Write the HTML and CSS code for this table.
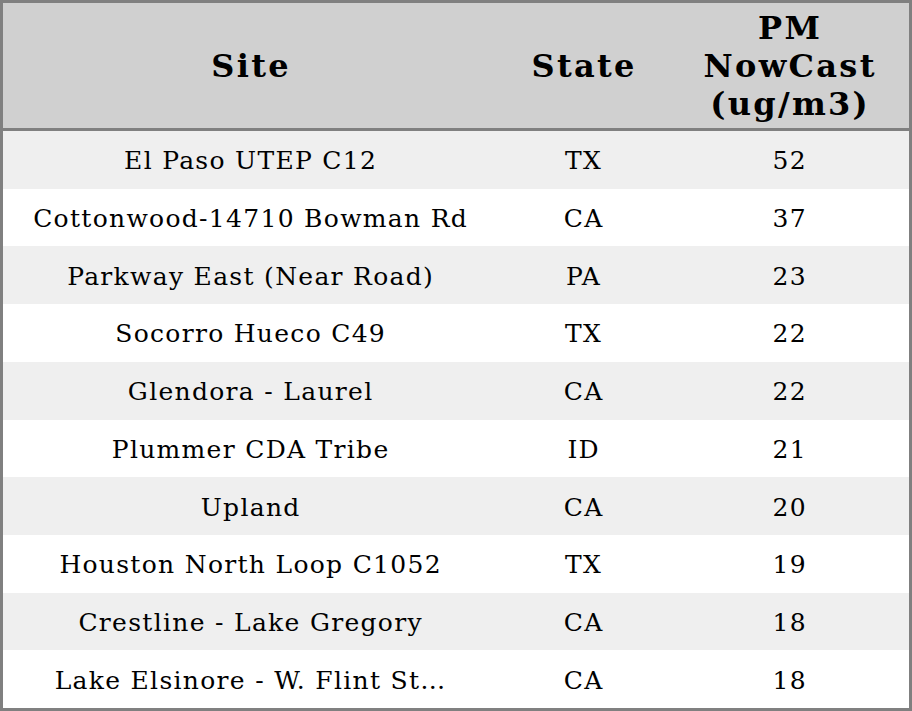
FILE: index.html
```html
<!DOCTYPE html>
<html>
<head>
<meta charset="utf-8">
<link rel="stylesheet" href="styles.css">
</head>
<body>
<div class="table">
  <div class="row head">
    <div class="cell">Site</div>
    <div class="cell">State</div>
    <div class="cell">PM<br>NowCast<br>(ug/m3)</div>
  </div>
  <div class="row odd"><div class="cell">El Paso UTEP C12</div><div class="cell">TX</div><div class="cell">52</div></div>
  <div class="row"><div class="cell">Cottonwood-14710 Bowman Rd</div><div class="cell">CA</div><div class="cell">37</div></div>
  <div class="row odd"><div class="cell">Parkway East (Near Road)</div><div class="cell">PA</div><div class="cell">23</div></div>
  <div class="row"><div class="cell">Socorro Hueco C49</div><div class="cell">TX</div><div class="cell">22</div></div>
  <div class="row odd"><div class="cell">Glendora - Laurel</div><div class="cell">CA</div><div class="cell">22</div></div>
  <div class="row"><div class="cell">Plummer CDA Tribe</div><div class="cell">ID</div><div class="cell">21</div></div>
  <div class="row odd"><div class="cell">Upland</div><div class="cell">CA</div><div class="cell">20</div></div>
  <div class="row"><div class="cell">Houston North Loop C1052</div><div class="cell">TX</div><div class="cell">19</div></div>
  <div class="row odd"><div class="cell">Crestline - Lake Gregory</div><div class="cell">CA</div><div class="cell">18</div></div>
  <div class="row"><div class="cell">Lake Elsinore - W. Flint St…</div><div class="cell">CA</div><div class="cell">18</div></div>
</div>
</body>
</html>
```
FILE: styles.css
```css
html, body {
  margin: 0;
  padding: 0;
  background: #fff;
}
.table {
  box-sizing: border-box;
  width: 912px;
  height: 711px;
  border: 3px solid #808080;
  display: flex;
  flex-direction: column;
  font-family: "DejaVu Serif", serif;
  color: #000;
}
.row {
  flex: 1 1 0;
  display: grid;
  grid-template-columns: 494px 172px 240px;
  font-size: 25px;
  letter-spacing: 1.3px;
  background: #fff;
}
.row .cell {
  padding-left: 1.3px;
  padding-top: 2px;
}
.row.odd {
  background: #efefef;
}
.row.head {
  flex: 0 0 128px;
  box-sizing: border-box;
  border-bottom: 3px solid #808080;
  background: #d0d0d0;
  font-weight: bold;
  font-size: 32px;
  letter-spacing: 2.3px;
}
.row.head .cell {
  padding-left: 2.3px;
  padding-top: 0;
}
.cell {
  display: flex;
  align-items: center;
  justify-content: center;
  text-align: center;
  white-space: nowrap;
}
```
